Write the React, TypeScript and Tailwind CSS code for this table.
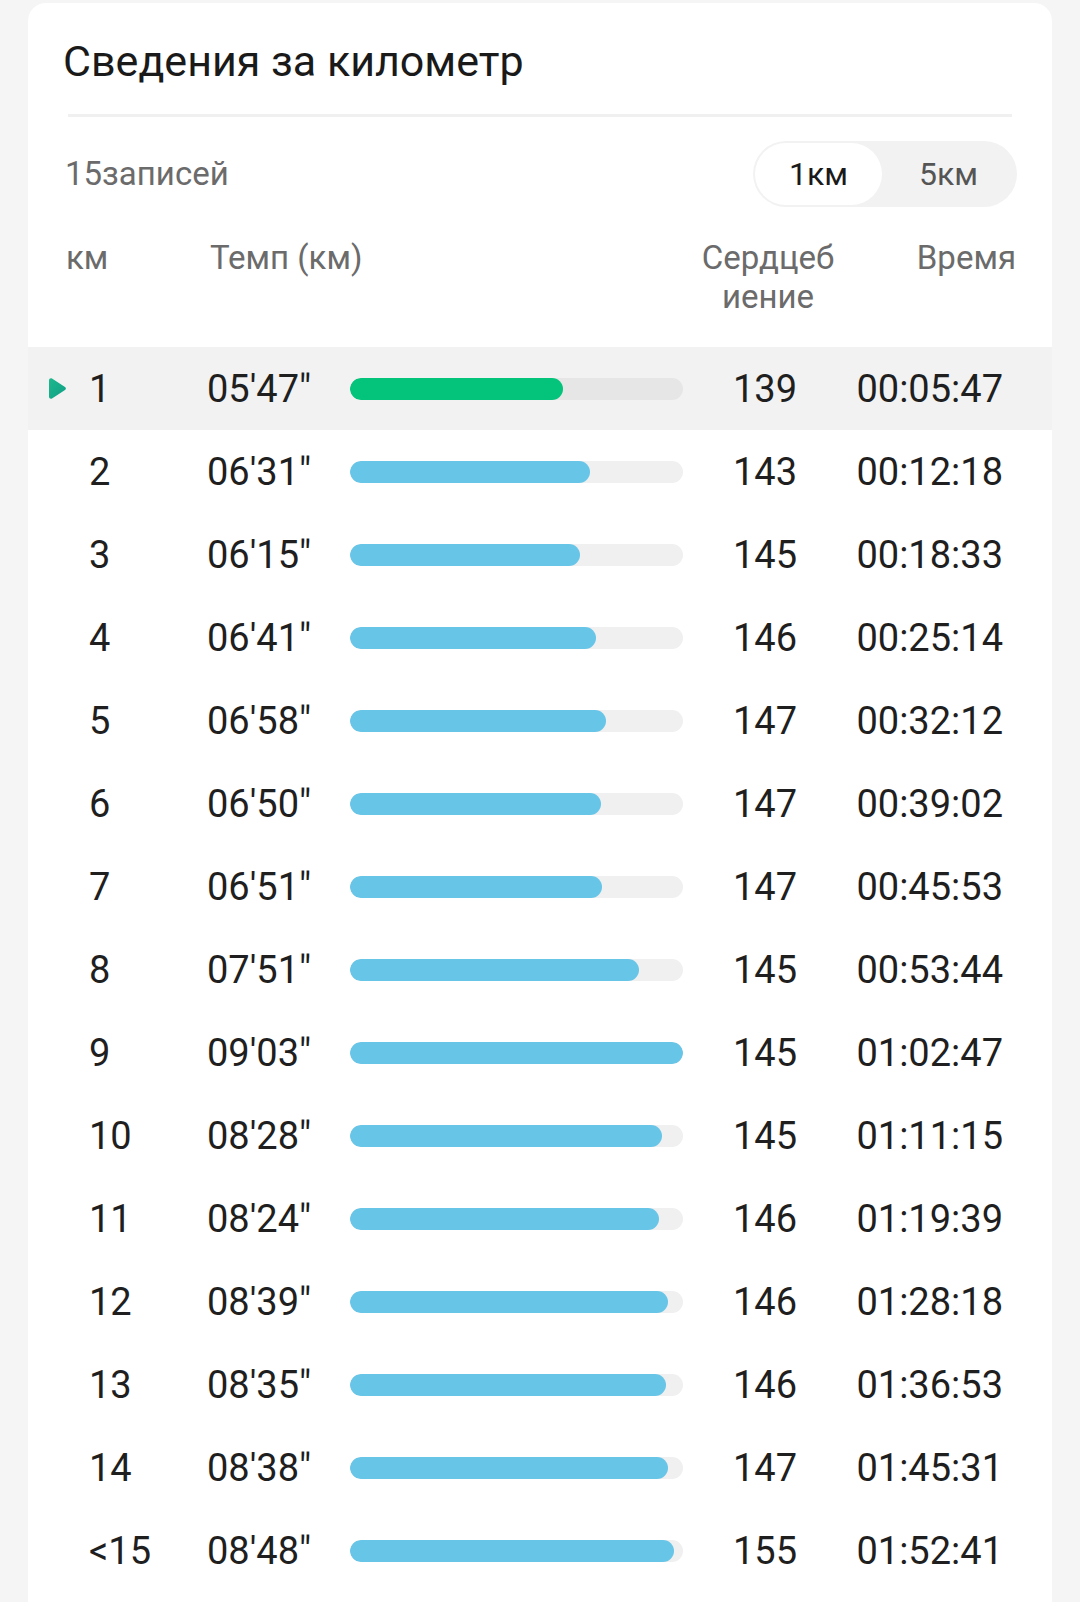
import { useState } from 'react';

type Split = { km: string; pace: string; hr: number; time: string };

const splits: Split[] = [
  { km: '1', pace: `05'47"`, hr: 139, time: '00:05:47' },
  { km: '2', pace: `06'31"`, hr: 143, time: '00:12:18' },
  { km: '3', pace: `06'15"`, hr: 145, time: '00:18:33' },
  { km: '4', pace: `06'41"`, hr: 146, time: '00:25:14' },
  { km: '5', pace: `06'58"`, hr: 147, time: '00:32:12' },
  { km: '6', pace: `06'50"`, hr: 147, time: '00:39:02' },
  { km: '7', pace: `06'51"`, hr: 147, time: '00:45:53' },
  { km: '8', pace: `07'51"`, hr: 145, time: '00:53:44' },
  { km: '9', pace: `09'03"`, hr: 145, time: '01:02:47' },
  { km: '10', pace: `08'28"`, hr: 145, time: '01:11:15' },
  { km: '11', pace: `08'24"`, hr: 146, time: '01:19:39' },
  { km: '12', pace: `08'39"`, hr: 146, time: '01:28:18' },
  { km: '13', pace: `08'35"`, hr: 146, time: '01:36:53' },
  { km: '14', pace: `08'38"`, hr: 147, time: '01:45:31' },
  { km: '<15', pace: `08'48"`, hr: 155, time: '01:52:41' },
];

const toSeconds = (pace: string) => {
  const m = pace.match(/(\d+)'(\d+)/);
  return m ? Number(m[1]) * 60 + Number(m[2]) : 0;
};

const slowest = Math.max(...splits.map((s) => toSeconds(s.pace)));

function PlayMark() {
  return (
    <svg width="20" height="23" viewBox="0 0 20 23">
      <defs>
        <linearGradient id="mark" x1="0" y1="0" x2="1" y2="1">
          <stop offset="0" stopColor="#1db88c" />
          <stop offset="1" stopColor="#0f9f86" />
        </linearGradient>
      </defs>
      <path
        d="M2 3.2C2 1.6 3.7 0.7 5 1.5L18 10C19.2 10.8 19.2 12.2 18 13L5 21.5C3.7 22.3 2 21.4 2 19.8Z"
        fill="url(#mark)"
      />
    </svg>
  );
}

export default function App() {
  const [unit, setUnit] = useState<'1' | '5'>('1');
  const [active] = useState(0);

  return (
    <div
      className="min-h-[1602px] bg-[#f5f5f5] px-[28px] pt-[3px]"
      style={{ fontFamily: 'Roboto, "Noto Sans", sans-serif' }}
    >
      <div className="rounded-t-[18px] bg-white pb-[40px]">
        <h2 className="pl-[35px] pt-[33px] text-[43px] leading-[50px] text-[#1a1a1a]">
          Сведения за километр
        </h2>
        <div className="mx-[40px] mt-[28px] h-[3px] bg-[#f0f0f0]" />

        {/* count + unit toggle */}
        <div className="mt-[24px] flex items-center justify-between pl-[37px] pr-[35px]">
          <span className="text-[33px] leading-[40px] text-[#6b6b6b]">15записей</span>
          <div className="flex h-[66px] w-[264px] items-center rounded-full bg-[#f2f2f2] p-[2px]">
            <button
              onClick={() => setUnit('1')}
              className={
                'h-[62px] w-[127px] rounded-full text-[32px] ' +
                (unit === '1' ? 'bg-white text-[#1a1a1a]' : 'text-[#555555]')
              }
            >
              1км
            </button>
            <button
              onClick={() => setUnit('5')}
              className={
                'h-[62px] flex-1 rounded-full text-[32px] ' +
                (unit === '5' ? 'bg-white text-[#1a1a1a]' : 'text-[#555555]')
              }
            >
              5км
            </button>
          </div>
        </div>

        {/* column headers */}
        <div className="mt-[31px] flex items-start text-[33px] leading-[39px] text-[#6b6b6b]">
          <span className="ml-[38px] w-[144px]">км</span>
          <span className="w-[478px]">Темп (км)</span>
          <span className="w-[160px] text-center">
            Сердцеб
            <br />
            иение
          </span>
          <span className="ml-auto mr-[36px]">Время</span>
        </div>

        {/* rows */}
        <div className="mt-[31px]">
          {splits.map((s, i) => {
            const pct = (toSeconds(s.pace) / slowest) * 100;
            const isActive = i === active;
            return (
              <div
                key={s.km}
                className={
                  'flex h-[83px] items-center pl-[19px] text-[38px] leading-[38px] text-[#1f1f1f] ' +
                  (isActive ? 'bg-[#f2f2f2]' : '')
                }
              >
                <div className="flex w-[20px] items-center">{isActive && <PlayMark />}</div>
                <span className="ml-[22px] w-[118px]">{s.km}</span>
                <span className="w-[143px]">{s.pace}</span>
                <div
                  className={
                    'h-[22px] w-[333px] overflow-hidden rounded-full ' +
                    (isActive ? 'bg-[#e6e6e6]' : 'bg-[#f0f0f0]')
                  }
                >
                  <div
                    className={'h-full rounded-full ' + (isActive ? 'bg-[#03c47a]' : 'bg-[#67c5e8]')}
                    style={{ width: `${pct}%` }}
                  />
                </div>
                <span className="w-[164px] text-center">{s.hr}</span>
                <span className="w-[156px] text-right">{s.time}</span>
              </div>
            );
          })}
        </div>
      </div>
    </div>
  );
}
